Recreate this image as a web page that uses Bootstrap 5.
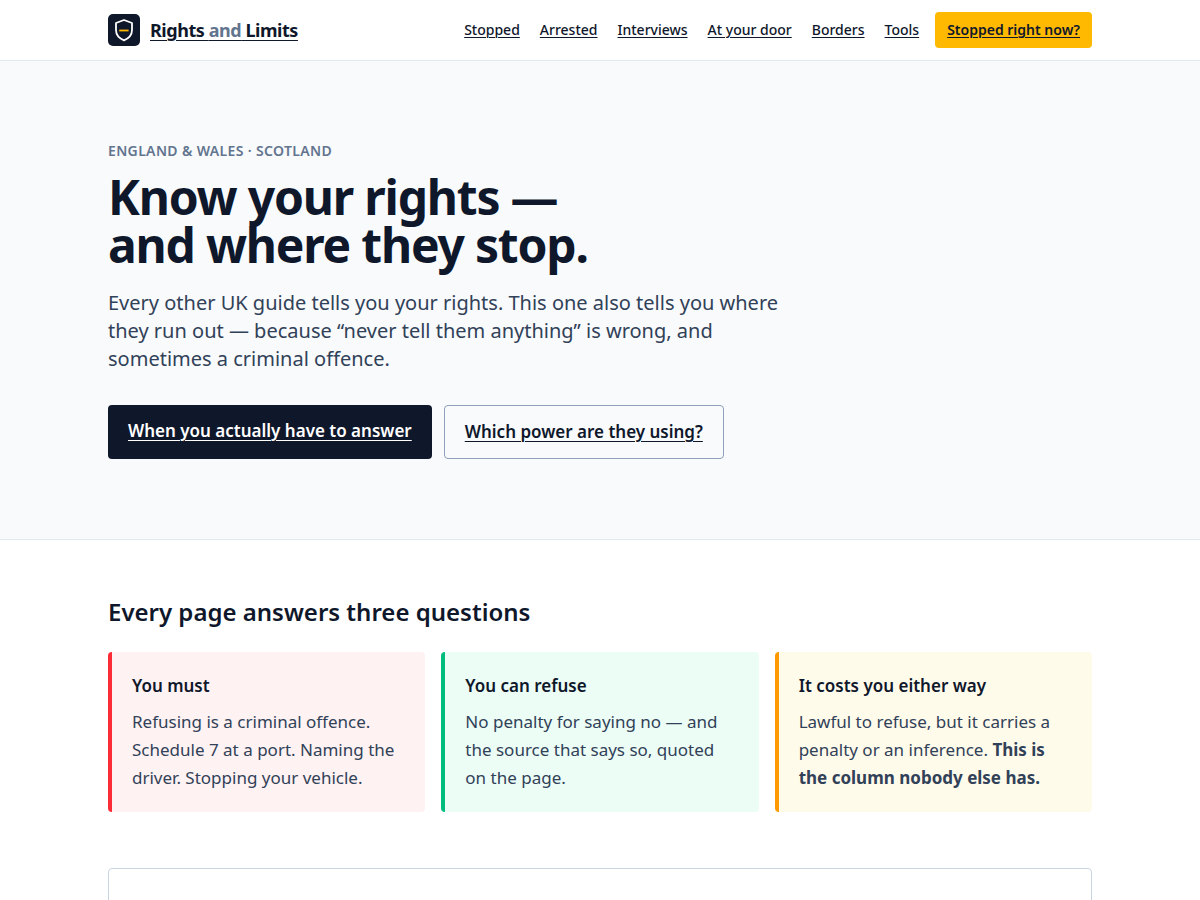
<!DOCTYPE html>
<html lang="en-GB">
<head>
<meta charset="utf-8">
<meta name="viewport" content="width=device-width, initial-scale=1">
<title>Rights and Limits</title>
<link rel="stylesheet" href="https://cdn.jsdelivr.net/npm/bootstrap@5.3.0/dist/css/bootstrap.min.css">
<style>
  :root { --ink: #0f172b; --slate: #62748e; --body: #314158; --line: #e2e8f0; }
  body { font-family: "Noto Sans", sans-serif; font-size: 17px; line-height: 28px; color: var(--ink); background: #fff; }
  a { color: inherit; text-decoration: underline; text-decoration-thickness: 1px; text-underline-offset: 3px; }
  .wrap { max-width: 1024px; padding: 0 20px; margin: 0 auto; }
  .topbar { border-bottom: 1px solid var(--line); }
  .topbar .navbar-brand { font-size: 18px; line-height: 28px; font-weight: 700; letter-spacing: -0.025em; color: var(--ink); gap: 10px; }
  .brand-name { text-decoration: underline 1px; }
  .brand-and { color: var(--slate); }
  .topbar .nav-link { font-size: 14px; line-height: 20px; font-weight: 500; color: var(--ink); padding: 8px; text-decoration: underline 1px; text-underline-offset: 2px; }
  .urgent { font-size: 14px; line-height: 20px; font-weight: 600; background: #ffb900; border-radius: 4px; padding: 8px 12px; color: var(--ink); text-underline-offset: 2px; }
  .hero { background: #f8fafc; border-bottom: 1px solid var(--line); padding: 80px 0; }
  .eyebrow { font-size: 14px; line-height: 20px; font-weight: 600; letter-spacing: 0.025em; color: var(--slate); margin-bottom: 12px; }
  .hero h1 { font-size: 48px; line-height: 48px; font-weight: 700; letter-spacing: -0.025em; margin-bottom: 20px; }
  .intro { font-size: 20px; line-height: 28px; color: var(--body); max-width: 672px; margin-bottom: 32px; }
  .actions { gap: 12px; }
  .cta { font-weight: 600; border-radius: 4px; padding: 12px 20px; }
  .cta-dark { background: var(--ink); color: #fff; }
  .cta-line { border: 1px solid #90a1b9; }
  .questions { padding: 56px 0; }
  .questions h2 { font-size: 24px; line-height: 32px; font-weight: 600; margin-bottom: 24px; }
  .answer { border-left: 4px solid; border-radius: 4px; padding: 20px; }
  .answer h3 { font-size: 17px; line-height: 28px; font-weight: 600; margin-bottom: 8px; color: var(--ink); }
  .answer p { color: var(--body); margin: 0; }
  .answer-must { background: #fef2f2; border-color: #fb2c36; }
  .answer-refuse { background: #ecfdf5; border-color: #00bc7d; }
  .answer-cost { background: #fffbeb; border-color: #fe9a00; }
  .panel { border: 1px solid #cad5e2; border-radius: 4px; }
</style>
</head>
<body>
<header class="topbar navbar navbar-expand-md p-0">
  <div class="wrap w-100 d-flex flex-wrap align-items-center justify-content-between">
    <a class="navbar-brand d-flex align-items-center p-0 m-0" href="#">
      <svg width="32" height="32" viewBox="0 0 32 32" fill="none" aria-hidden="true">
        <rect width="32" height="32" rx="5" fill="#0f172b"/>
        <path d="M16 6 L24 9 V16 C24 21 20.8 24.3 16 26.3 C11.2 24.3 8 21 8 16 V9 Z" stroke="#fff" stroke-width="1.8" stroke-linejoin="round"/>
        <path d="M11.2 16.5 H20.6" stroke="#ffb900" stroke-width="1.8"/>
      </svg>
      <span class="brand-name">Rights <span class="brand-and">and</span> Limits</span>
    </a>
    <nav class="d-flex flex-wrap align-items-center gap-1 py-2 my-1" aria-label="Main">
      <a class="nav-link" href="#">Stopped</a>
      <a class="nav-link" href="#">Arrested</a>
      <a class="nav-link" href="#">Interviews</a>
      <a class="nav-link" href="#">At your door</a>
      <a class="nav-link" href="#">Borders</a>
      <a class="nav-link" href="#">Tools</a>
      <a class="urgent ms-1" href="#">Stopped right now?</a>
    </nav>
  </div>
</header>
<main>
  <section class="hero">
    <div class="wrap">
      <p class="eyebrow text-uppercase">England &amp; Wales · Scotland</p>
      <h1>Know your rights —<br>and where they stop.</h1>
      <p class="intro">Every other UK guide tells you your rights. This one also tells you where they run out — because “never tell them anything” is wrong, and sometimes a criminal offence.</p>
      <div class="actions d-flex flex-wrap">
        <a class="cta cta-dark" href="#">When you actually have to answer</a>
        <a class="cta cta-line" href="#">Which power are they using?</a>
      </div>
    </div>
  </section>
  <section class="questions">
    <div class="wrap">
      <h2>Every page answers three questions</h2>
      <div class="row row-cols-1 row-cols-md-3 g-3">
        <div class="col">
          <div class="answer answer-must h-100">
            <h3>You must</h3>
            <p>Refusing is a criminal offence. Schedule 7 at a port. Naming the driver. Stopping your vehicle.</p>
          </div>
        </div>
        <div class="col">
          <div class="answer answer-refuse h-100">
            <h3>You can refuse</h3>
            <p>No penalty for saying no — and the source that says so, quoted on the page.</p>
          </div>
        </div>
        <div class="col">
          <div class="answer answer-cost h-100">
            <h3>It costs you either way</h3>
            <p>Lawful to refuse, but it carries a penalty or an inference. <strong>This is the column nobody else has.</strong></p>
          </div>
        </div>
      </div>
    </div>
  </section>
  <section class="wrap pb-5">
    <div class="panel p-5"></div>
  </section>
</main>
<script src="https://cdn.jsdelivr.net/npm/bootstrap@5.3.0/dist/js/bootstrap.bundle.min.js"></script>
</body>
</html>
